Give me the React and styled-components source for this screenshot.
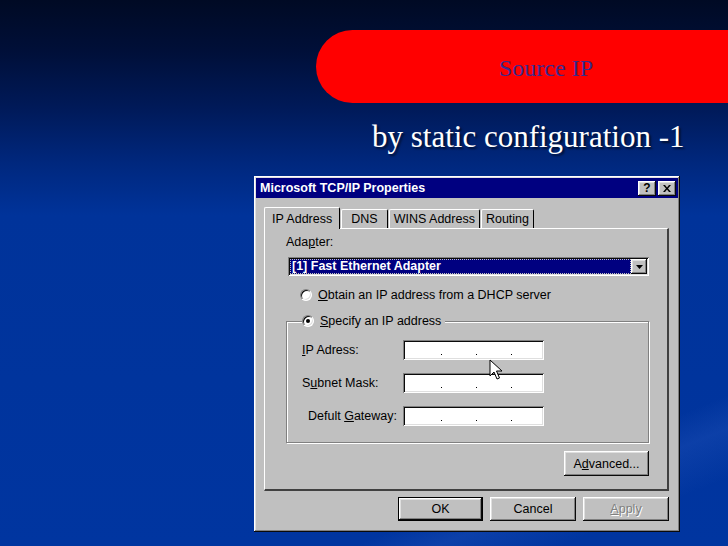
import React from 'react'
import styled, { createGlobalStyle } from 'styled-components'

const Global = createGlobalStyle`
  html, body { margin: 0; padding: 0; }
  body { font-family: "Liberation Sans", Arial, sans-serif; }
`

const raised = `
  box-shadow: inset -1px -1px #0a0a0a, inset 1px 1px #ffffff,
    inset -2px -2px #808080, inset 2px 2px #dfdfdf;
`
const sunken = `
  box-shadow: inset 1px 1px #808080, inset -1px -1px #ffffff,
    inset 2px 2px #0a0a0a, inset -2px -2px #dfdfdf;
`

const Slide = styled.div`
  position: relative;
  width: 728px;
  height: 546px;
  overflow: hidden;
  display: flex;
  flex-direction: column;
  background:
    linear-gradient(158deg, transparent 82%, rgba(120,160,255,0.10) 86%, transparent 92%),
    linear-gradient(180deg, #000a24 0px, #000f38 50px, #001a5a 110px, #00287f 165px, #00339a 215px, #0035a0 546px);
`

const Banner = styled.div`
  margin: 30px 0 0 316px;
  height: 73px;
  box-sizing: border-box;
  border-radius: 37px 0 0 37px;
  background: #ff0000;
  display: flex;
  align-items: center;
  justify-content: center;
  padding: 4px 0 0 48px;
  font-family: "Liberation Serif", "Times New Roman", serif;
  font-size: 24px;
  color: #3b2a8c;
`

const Subtitle = styled.div`
  margin: 16px 0 0 372px;
  height: 36px;
  line-height: 36px;
  font-family: "Liberation Serif", "Times New Roman", serif;
  font-size: 31px;
  color: #ffffff;
  text-shadow: 2px 2px 2px rgba(0,0,0,0.55);
`

const Dialog = styled.div`
  margin: 21px 0 0 254px;
  width: 426px;
  height: 356px;
  box-sizing: border-box;
  background: #c0c0c0;
  padding: 2px;
  ${raised}
  display: flex;
  flex-direction: column;
  font-size: 12.5px;
  color: #000;
`

const TitleBar = styled.div`
  height: 20px;
  background: #000080;
  color: #fff;
  font-weight: bold;
  font-size: 12.5px;
  display: flex;
  align-items: center;
  padding: 0 2px 0 4px;
`

const TitleText = styled.span`
  flex: 1;
`

const CapButton = styled.div`
  width: 18px;
  height: 15px;
  margin-left: ${p => p.gap || 0}px;
  background: #c0c0c0;
  ${raised}
  color: #000;
  display: flex;
  align-items: center;
  justify-content: center;
  font-size: 12px;
  font-weight: bold;
`

const Body = styled.div`
  padding: 8px 9px 0 8px;
  display: flex;
  flex-direction: column;
  flex: 1;
`

const Tabs = styled.div`
  display: flex;
  align-items: flex-end;
  height: 22px;
  position: relative;
  z-index: 1;
`

const Tab = styled.div`
  height: ${p => (p.active ? 22 : 19)}px;
  box-sizing: border-box;
  padding: 0 ${p => p.pad}px;
  margin-right: 1px;
  margin-bottom: ${p => (p.active ? -1 : 0)}px;
  background: #c0c0c0;
  border-top: 1px solid #fff;
  border-left: 1px solid #fff;
  border-right: 1px solid #000;
  border-radius: 2px 2px 0 0;
  display: flex;
  align-items: center;
  white-space: nowrap;
`

const Panel = styled.div`
  height: 263px;
  box-sizing: border-box;
  border-top: 1px solid #fff;
  border-left: 1px solid #fff;
  border-right: 2px solid #404040;
  border-bottom: 2px solid #404040;
  padding: 6px 0 0 21px;
  display: flex;
  flex-direction: column;
`

const Label = styled.div`
  height: 14px;
  line-height: 14px;
`

const U = styled.span`
  text-decoration: underline;
`

const Select = styled.div`
  margin: 8px 0 0 2px;
  width: 361px;
  height: 19px;
  box-sizing: border-box;
  background: #fff;
  padding: 2px;
  ${sunken}
  display: flex;
`

const Selected = styled.div`
  flex: 1;
  background: #000080;
  color: #fff;
  font-weight: bold;
  outline: 1px dotted #c0c0c0;
  outline-offset: -1px;
  padding-left: 2px;
  line-height: 15px;
`

const Arrow = styled.div`
  width: 16px;
  background: #c0c0c0;
  ${raised}
  display: flex;
  align-items: center;
  justify-content: center;
`

const RadioRow = styled.div`
  display: flex;
  align-items: center;
  margin: ${p => p.top}px 0 0 ${p => p.left}px;
  height: 16px;
  background: #c0c0c0;
  padding-right: 4px;
  align-self: flex-start;
`

const Radio = styled.div`
  width: 12px;
  height: 12px;
  border-radius: 50%;
  box-sizing: border-box;
  background: #fff;
  border: 1px solid;
  border-color: #808080 #fff #fff #808080;
  box-shadow: inset 1px 1px #0a0a0a, inset -1px -1px #dfdfdf;
  margin-right: 6px;
  display: flex;
  align-items: center;
  justify-content: center;
  &::after {
    content: "";
    width: 4px;
    height: 4px;
    border-radius: 50%;
    background: ${p => (p.checked ? '#000' : 'transparent')};
  }
`

const Group = styled.fieldset`
  margin: 10px 0 0 0;
  width: 363px;
  height: 130px;
  min-inline-size: 0;
  box-sizing: border-box;
  border: 1px solid #808080;
  box-shadow: 1px 1px #fff, inset 1px 1px #fff;
  padding: 11px 0 0 15px;
  display: flex;
  flex-direction: column;
  gap: 13px;
`

const Legend = styled.legend`
  padding: 0;
  margin: 0;
`

const Field = styled.div`
  display: flex;
  align-items: center;
  height: 20px;
`

const FieldLabel = styled.div`
  width: ${p => 101 - p.indent}px;
  padding-left: ${p => p.indent}px;
`

const IpBox = styled.div`
  width: 141px;
  height: 20px;
  box-sizing: border-box;
  background: #fff;
  ${sunken}
  display: flex;
  align-items: flex-end;
  padding: 0 0 5px 38px;
  gap: 34px;
`

const Dot = styled.span`
  width: 1px;
  height: 1px;
  background: #000;
`

const PanelFooter = styled.div`
  display: flex;
  justify-content: flex-end;
  padding-right: 18px;
  margin-top: 8px;
`

const Button = styled.div`
  width: ${p => p.w}px;
  height: ${p => p.h}px;
  box-sizing: border-box;
  background: #c0c0c0;
  ${raised}
  ${p => p.primary && `
    outline: 1px solid #000;
    outline-offset: -1px;
    box-shadow: inset -2px -2px #0a0a0a, inset 2px 2px #ffffff,
      inset -3px -3px #808080, inset 3px 3px #dfdfdf;
  `}
  display: flex;
  align-items: center;
  justify-content: center;
  color: ${p => (p.disabled ? '#808080' : '#000')};
  text-shadow: ${p => (p.disabled ? '1px 1px #fff' : 'none')};
`

const Buttons = styled.div`
  display: flex;
  justify-content: flex-end;
  gap: 7px;
  margin-top: 6px;
`

const Cursor = styled.svg`
  position: absolute;
  left: 489px;
  top: 359px;
`

const fields = [
  { label: <><U>I</U>P Adress:</>, indent: 0 },
  { label: <>S<U>u</U>bnet Mask:</>, indent: 0 },
  { label: <>Defult <U>G</U>ateway:</>, indent: 6 },
]

export default function App() {
  return (
    <Slide>
      <Global />
      <Banner>Source IP</Banner>
      <Subtitle>by static configuration -1</Subtitle>
      <Dialog>
        <TitleBar>
          <TitleText>Microsoft TCP/IP Properties</TitleText>
          <CapButton>?</CapButton>
          <CapButton gap={2}>
            <svg width="8" height="7" viewBox="0 0 8 7">
              <path d="M0 0h2l2 2.5L6 0h2L5 3.5 8 7H6L4 4.5 2 7H0l3-3.5z" fill="#000" />
            </svg>
          </CapButton>
        </TitleBar>
        <Body>
          <Tabs>
            <Tab active pad={7}>IP Address</Tab>
            <Tab pad={9}>DNS</Tab>
            <Tab pad={4}>WINS Address</Tab>
            <Tab pad={4}>Routing</Tab>
          </Tabs>
          <Panel>
            <Label>Ada<U>p</U>ter:</Label>
            <Select>
              <Selected>[1] Fast Ethernet Adapter</Selected>
              <Arrow>
                <svg width="7" height="4" viewBox="0 0 7 4">
                  <path d="M0 0h7L3.5 4z" fill="#000" />
                </svg>
              </Arrow>
            </Select>
            <RadioRow top={11} left={14}>
              <Radio />
              <span><U>O</U>btain an IP address from a DHCP server</span>
            </RadioRow>
            <Group>
              <Legend>
                <RadioRow top={0} left={0}>
                  <Radio checked />
                  <span><U>S</U>pecify an IP address</span>
                </RadioRow>
              </Legend>
              {fields.map((f, i) => (
                <Field key={i}>
                  <FieldLabel indent={f.indent}>{f.label}</FieldLabel>
                  <IpBox><Dot /><Dot /><Dot /></IpBox>
                </Field>
              ))}
            </Group>
            <PanelFooter>
              <Button w={85} h={25}>A<U>d</U>vanced...</Button>
            </PanelFooter>
          </Panel>
          <Buttons>
            <Button primary w={85} h={24}>OK</Button>
            <Button w={86} h={24}>Cancel</Button>
            <Button disabled w={86} h={24}><U>A</U>pply</Button>
          </Buttons>
        </Body>
      </Dialog>
      <Cursor width="14" height="22" viewBox="0 0 14 22">
        <path d="M1 1v16l4-4 3 7 2.5-1-3-7h5.5z" fill="#fff" stroke="#000" strokeWidth="1" />
      </Cursor>
    </Slide>
  )
}
